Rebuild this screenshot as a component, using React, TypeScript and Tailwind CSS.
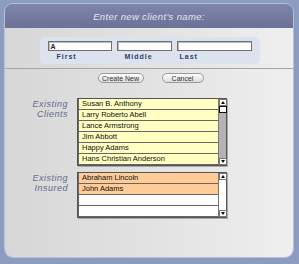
const clients = [
  "Susan B. Anthony",
  "Larry Roberto Abell",
  "Lance Armstrong",
  "Jim Abbott",
  "Happy Adams",
  "Hans Christian Anderson",
];

const insured = ["Abraham Lincoln", "John Adams", "", ""];

function Arrow({ down }: { down?: boolean }) {
  return (
    <div className="flex h-[7px] w-[8px] items-center justify-center border border-[#777] bg-white">
      <svg width="4" height="3" viewBox="0 0 4 3">
        <path d={down ? "M0 0 L4 0 L2 3 Z" : "M0 3 L4 3 L2 0 Z"} fill="#111" />
      </svg>
    </div>
  );
}

function ListBox({
  rows,
  rowBg,
  trackBg,
  thumb,
}: {
  rows: string[];
  rowBg: (i: number) => string;
  trackBg: string;
  thumb?: boolean;
}) {
  return (
    <div className="flex w-[150px] border border-[#555] shadow-[1px_1px_0_#aaa]">
      <div className="flex-1">
        {rows.map((r, i) => (
          <div
            key={i}
            className={`flex h-[11px] items-center border-b border-l border-[#666] pl-[3px] text-[7.5px] leading-none text-[#111] ${rowBg(i)}`}
          >
            {r}
          </div>
        ))}
      </div>
      <div className={`flex w-[8px] flex-col border-l border-[#777] ${trackBg}`}>
        <Arrow />
        {thumb && <div className="h-[7px] w-[8px] border border-[#111] bg-white" />}
        <div className="flex-1" />
        <Arrow down />
      </div>
    </div>
  );
}

function Label({ a, b }: { a: string; b: string }) {
  return (
    <div className="w-[64px] pr-[1px] pt-[1px] text-right text-[9px] italic leading-[10px] tracking-[0.5px] text-[#626b8c]">
      <div>{a}</div>
      <div>{b}</div>
    </div>
  );
}

export default function App() {
  return (
    <div
      className="h-[264px] w-[299px] bg-[#8c9bc0] pb-[6px] pl-[4px] pr-[5px] pt-[3px]"
      style={{ fontFamily: '"Liberation Sans", Arial, sans-serif' }}
    >
      <div className="flex h-full flex-col overflow-hidden rounded-[9px] border border-[#b6c0da]">
        {/* Header */}
        <div className="flex h-[24px] items-center justify-center bg-gradient-to-b from-[#7f85ab] to-[#6c7296] pt-[2px] text-[9.5px] italic tracking-[0.35px] text-[#e2e5f0]">
          Enter new client's name:
        </div>

        {/* Body */}
        <div className="flex flex-1 flex-col bg-gradient-to-r from-[#d7d7d7] via-[#e2e2e2] to-[#efefef]">
          <div className="flex justify-center pt-[9px] pl-[1px]">
            <div className="flex gap-[5px] rounded-[5px] bg-[#dde2ef] px-[8px] pt-[4px] pb-[3px]">
              {[
                { l: "First", w: "w-[64px]", p: "pl-[9px]", v: "A" },
                { l: "Middle", w: "w-[55px]", p: "pl-[8px]", v: "" },
                { l: "Last", w: "w-[75px]", p: "pl-[3px]", v: "" },
              ].map((f) => (
                <div key={f.l} className={f.w}>
                  <div className="flex h-[10px] items-center border border-[#707070] bg-white pl-[2px] text-[7px] font-bold leading-none text-[#222] shadow-[inset_1px_1px_0_#bbb]">
                    {f.v}
                  </div>
                  <div className={`${f.p} mt-[1px] text-[7px] font-bold leading-[9px] tracking-[1px] text-[#2d3d6c]`}>
                    {f.l}
                  </div>
                </div>
              ))}
            </div>
          </div>

          <div className="mt-[4px] h-px bg-[#a5a5a5]" />

          <div className="mt-[4px] flex justify-center gap-[18px] pl-[3px]">
            <button className="h-[10px] w-[46px] rounded-full border border-[#9a9a9a] bg-gradient-to-b from-white to-[#dcdcdc] text-[7px] leading-none text-[#333]">
              Create New
            </button>
            <button className="h-[10px] w-[42px] rounded-full border border-[#9a9a9a] bg-gradient-to-b from-white to-[#dcdcdc] text-[7px] leading-none text-[#333]">
              Cancel
            </button>
          </div>

          <div className="mt-[15px] flex gap-[8px]">
            <Label a="Existing" b="Clients" />
            <ListBox
              rows={clients}
              rowBg={() => "bg-[#ffffc2]"}
              trackBg="bg-[#b3b3b3]"
              thumb
            />
          </div>

          <div className="mt-[6px] flex gap-[8px]">
            <Label a="Existing" b="Insured" />
            <ListBox
              rows={insured}
              rowBg={(i) => (i < 2 ? "bg-[#ffcb96]" : "bg-white")}
              trackBg="bg-white"
            />
          </div>
        </div>
      </div>
    </div>
  );
}
